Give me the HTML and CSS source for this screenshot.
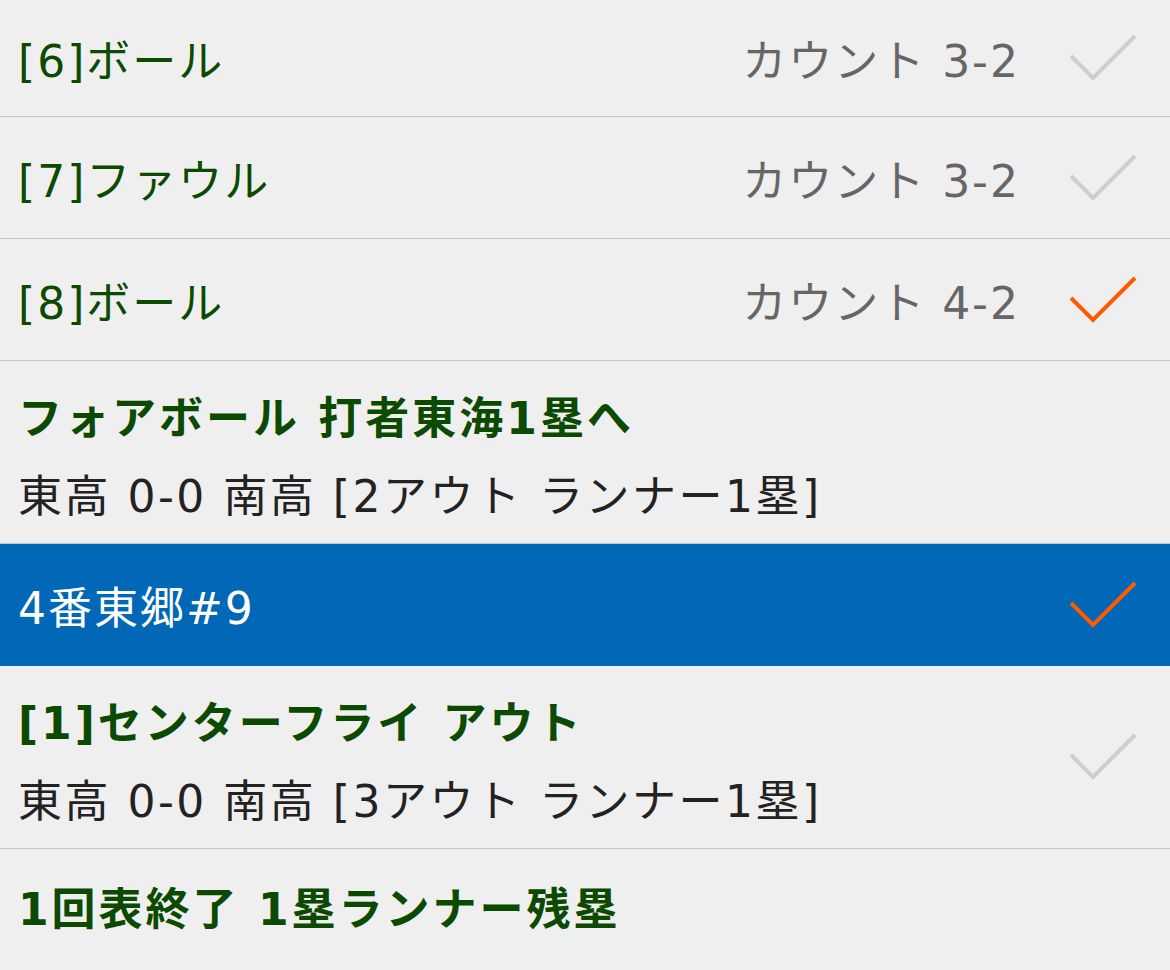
FILE: index.html
```html
<!DOCTYPE html>
<html lang="ja">
<head>
    <meta charset="UTF-8">
    <title>一球速報</title>
    <link rel="stylesheet" href="styles.css">
</head>
<body>
    <ul class="play-list">
        <li class="pitch first">
            <span class="pitch-name">[6]ボール</span>
            <span class="count">カウント 3-2</span>
            <svg class="check" viewBox="0 0 70 50"><polyline points="3,23 25,45 67,3"/></svg>
        </li>
        <li class="pitch">
            <span class="pitch-name">[7]ファウル</span>
            <span class="count">カウント 3-2</span>
            <svg class="check" viewBox="0 0 70 50"><polyline points="3,23 25,45 67,3"/></svg>
        </li>
        <li class="pitch">
            <span class="pitch-name">[8]ボール</span>
            <span class="count">カウント 4-2</span>
            <svg class="check on" viewBox="0 0 70 50"><polyline points="3,23 25,45 67,3"/></svg>
        </li>
        <li class="result">
            <div class="result-text">
                <div class="result-title">フォアボール 打者東海1塁へ</div>
                <div class="result-score">東高 0-0 南高 [2アウト ランナー1塁]</div>
            </div>
        </li>
        <li class="batter">
            <span class="batter-name">4番東郷#9</span>
            <svg class="check on" viewBox="0 0 70 50"><polyline points="3,23 25,45 67,3"/></svg>
        </li>
        <li class="result">
            <div class="result-text">
                <div class="result-title">[1]センターフライ アウト</div>
                <div class="result-score">東高 0-0 南高 [3アウト ランナー1塁]</div>
            </div>
            <svg class="check" viewBox="0 0 70 50"><polyline points="3,23 25,45 67,3"/></svg>
        </li>
        <li class="inning-end">
            <span class="result-title">1回表終了 1塁ランナー残塁</span>
        </li>
    </ul>
</body>
</html>
```

FILE: styles.css
```css
body {
    margin: 0;
    background-color: #efefef;
    font-family: "DejaVu Sans", "Noto Sans CJK JP", sans-serif;
}
.play-list {
    list-style: none;
    margin: 0;
    padding: 0;
}
.play-list li {
    display: flex;
    align-items: center;
    padding: 0 32px 0 18px;
    border-bottom: 1px solid #c4c4c4;
    box-sizing: border-box;
}
.pitch {
    height: 122px;
}
.pitch.first {
    height: 117px;
}
.pitch-name {
    flex: 1;
    font-size: 44px;
    letter-spacing: 2px;
    color: #0b4a00;
}
.count {
    font-size: 44px;
    letter-spacing: 2px;
    color: #666;
    margin-right: 48px;
}
.check {
    width: 70px;
    height: 50px;
    flex-shrink: 0;
}
.check polyline {
    fill: none;
    stroke: #cdcdcd;
    stroke-width: 4;
}
.check.on polyline {
    stroke: #ff5a00;
}
.result {
    height: 183px;
}
.result-text {
    flex: 1;
    padding-top: 12px;
}
.result-title {
    font-size: 44px;
    font-weight: bold;
    letter-spacing: 3px;
    color: #0b4a00;
    line-height: 56px;
}
.result-score {
    font-size: 44px;
    letter-spacing: 2.5px;
    color: #222;
    line-height: 56px;
    margin-top: 22px;
}
.play-list .batter {
    height: 122px;
    background-color: #0068b6;
    border-bottom: none;
}
.batter-name {
    flex: 1;
    font-size: 44px;
    letter-spacing: 2px;
    color: #fff;
}
.play-list .inning-end {
    height: 122px;
    border-bottom: none;
}
```
